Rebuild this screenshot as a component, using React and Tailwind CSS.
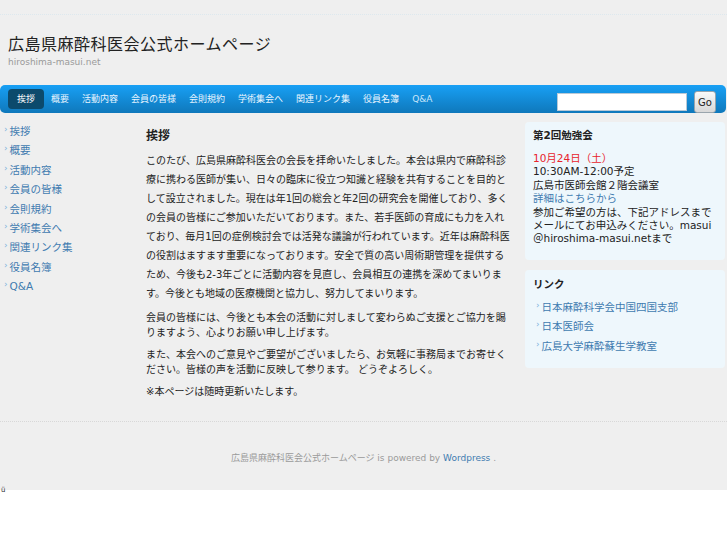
import React from 'react';

const font = 'font-["DejaVu_Sans","Noto_Sans_CJK_JP",sans-serif]';

const menu = ['挨拶', '概要', '活動内容', '会員の皆様', '会則規約', '学術集会へ', '関連リンク集', '役員名簿', 'Q&A'];

function Arrow() {
  return <span className="text-[9px] text-[#7fb2dc] leading-none relative -top-[3px] mr-[2px]">›</span>;
}

export default function App() {
  return (
    <div className={`${font} bg-white min-h-[545px]`}>
      <div className="bg-[#efefef] h-[490px] flex flex-col">
        {/* header */}
        <div className="h-[15px] border-b border-dotted border-[#dde8ee]" />
        <div className="px-[8px] pt-[20px] h-[70px]">
          <h1 className="text-[16px] leading-[20px] text-[#222] tracking-[0.5px]">広島県麻酔科医会公式ホームページ</h1>
          <p className="text-[9px] leading-[12px] text-[#9a9a9a] mt-[1px]">hiroshima-masui.net</p>
        </div>

        {/* nav */}
        <div className="h-[28px] mr-[1px] rounded-[5px] bg-gradient-to-b from-[#18a0f5] to-[#0f78bb] flex items-center pl-[8px] pr-[10px]">
          <div className="flex items-center gap-[1px]">
            {menu.map((m, i) => (
              <span
                key={m}
                className={`text-[9px] leading-[20px] px-[6px] rounded-[4px] ${i === 0 ? 'bg-[#0c4a6c] text-white px-[9px]' : m === 'Q&A' ? 'text-[#c9e6fa]' : 'text-[#e8f5ff]'}`}
              >
                {m}
              </span>
            ))}
          </div>
          <div className="ml-auto flex items-center gap-[7px] mt-[6px]">
            <input className="w-[130px] h-[18px] bg-white border border-[#b9c9d6] outline-none" />
            <button className="h-[22px] w-[22px] text-[10px] text-[#222] rounded-[3px] border border-[#9aa5ad] bg-gradient-to-b from-[#fafafa] to-[#d8d8d8]">Go</button>
          </div>
        </div>

        {/* body */}
        <div className="flex pt-[9px]">
          <ul className="w-[146px] pl-[4px]">
            {menu.map((m) => (
              <li key={m} className="text-[10.5px] leading-[19.4px] text-[#3f7bb0]">
                <Arrow />
                {m}
              </li>
            ))}
          </ul>

          <div className="w-[364px] pt-[5px] text-[10px] leading-[14.5px] text-[#222]">
            <h2 className="text-[12px] leading-[18px] font-bold text-[#222] mb-[6px]">挨拶</h2>
            <p className="mb-[8px] leading-[19px]">
              このたび、広島県麻酔科医会の会長を拝命いたしました。本会は県内で麻酔科診療に携わる医師が集い、日々の臨床に役立つ知識と経験を共有することを目的として設立されました。現在は年1回の総会と年2回の研究会を開催しており、多くの会員の皆様にご参加いただいております。また、若手医師の育成にも力を入れており、毎月1回の症例検討会では活発な議論が行われています。近年は麻酔科医の役割はますます重要になっております。安全で質の高い周術期管理を提供するため、今後も2-3年ごとに活動内容を見直し、会員相互の連携を深めてまいります。今後とも地域の医療機関と協力し、努力してまいります。
            </p>
            <p className="mb-[8px]">
              会員の皆様には、今後とも本会の活動に対しまして変わらぬご支援とご協力を賜りますよう、心よりお願い申し上げます。
            </p>
            <p className="mb-[8px]">
              また、本会へのご意見やご要望がございましたら、お気軽に事務局までお寄せください。皆様の声を活動に反映して参ります。 どうぞよろしく。
            </p>
            <p>※本ページは随時更新いたします。</p>
          </div>

          <div className="ml-[15px] w-[200px] flex flex-col gap-[10px]">
            <div className="bg-[#eef7fc] rounded-[4px] px-[8px] pt-[7px] pb-[14px] text-[10.5px] leading-[13.4px] text-[#222]">
              <h3 className="text-[10.5px] font-bold leading-[13px] mb-[10px]">第2回勉強会</h3>
              <p className="text-[#e8242c]">10月24日（土）</p>
              <p>10:30AM-12:00予定</p>
              <p>広島市医師会館２階会議室</p>
              <p className="text-[#3f7bb0]">詳細はこちらから</p>
              <p>参加ご希望の方は、下記アドレスまでメールにてお申込みください。masui＠hiroshima-masui.netまで</p>
            </div>
            <div className="bg-[#eef7fc] rounded-[4px] px-[8px] pt-[8px] pb-[12px] text-[10.5px] leading-[19.4px]">
              <h3 className="text-[10.5px] font-bold leading-[13px] text-[#222] mb-[7px]">リンク</h3>
              {['日本麻酔科学会中国四国支部', '日本医師会', '広島大学麻酔蘇生学教室'].map((l) => (
                <div key={l} className="text-[#3f7bb0] pl-[3px]">
                  <Arrow />
                  {l}
                </div>
              ))}
            </div>
          </div>
        </div>

        {/* footer */}
        <div className="mt-auto h-[69px] pt-[6px] border-t border-dotted border-[#d8d8d8] flex items-center justify-center text-[9px] text-[#9a9a9a]">
          <span>広島県麻酔科医会公式ホームページ is powered by <span className="text-[#3f7bb0]">Wordpress</span> .</span>
        </div>
      </div>
      <div className="text-[7px] leading-[8px] text-[#333] pl-[1px] -mt-[4px]">ü</div>
    </div>
  );
}
